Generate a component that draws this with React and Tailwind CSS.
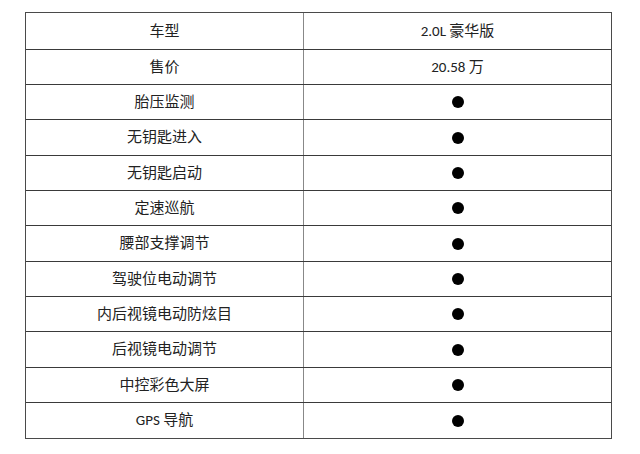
import React from 'react';

const rows = [
    ['车型', '2.0L 豪华版', 36],
    ['售价', '20.58 万', 35],
    ['胎压监测', null, 35],
    ['无钥匙进入', null, 36],
    ['无钥匙启动', null, 35],
    ['定速巡航', null, 35],
    ['腰部支撑调节', null, 36],
    ['驾驶位电动调节', null, 35],
    ['内后视镜电动防炫目', null, 35],
    ['后视镜电动调节', null, 36],
    ['中控彩色大屏', null, 35],
    ['GPS 导航', null, 36],
];

const heights = {
    36: 'h-[36px]',
    35: 'h-[35px]',
};

export default function App() {
    return (
        <div className="w-[640px] h-[454px] bg-white pt-[12px] pl-[25px]"
             style={{fontFamily: 'Calibri, "Open Sans", "Noto Sans CJK SC", sans-serif'}}>
            <div className="w-[587px] border border-[#4a4a4a] text-[15px] text-[#222]">
                {rows.map(([label, value, h], i) => (
                    <div key={i}
                         className={`flex ${heights[h]} ${i > 0 ? 'border-t border-[#3a3a3a]' : ''}`}>
                        <div className="w-[278px] flex items-center justify-center border-r border-[#888]">
                            {label}
                        </div>
                        <div className="flex-1 flex items-center justify-center">
                            {value ? value : <span className="block w-[12px] h-[12px] rounded-full bg-black" />}
                        </div>
                    </div>
                ))}
            </div>
        </div>
    );
}
